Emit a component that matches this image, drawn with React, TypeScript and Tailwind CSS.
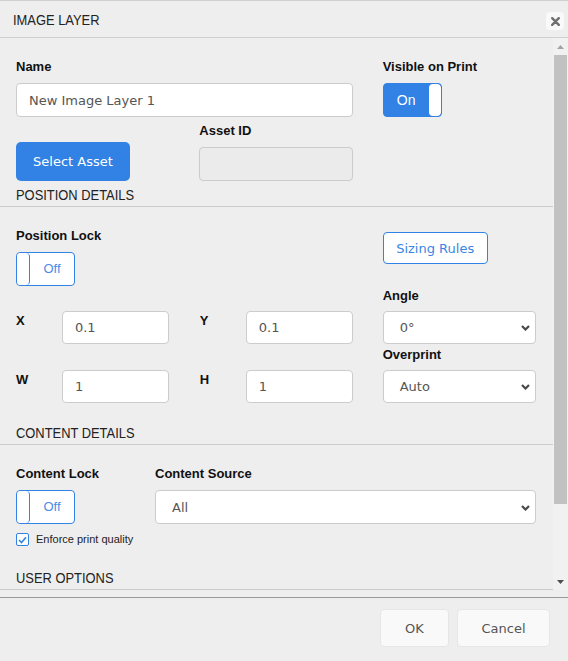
import React from "react";

const LABEL = "font-['Liberation_Sans',Arial,sans-serif] font-bold text-[13px] leading-[16px] text-[#111]";
const FIELD = "font-['DejaVu_Sans',Verdana,sans-serif] text-[13px] text-[#555]";
const HEAD = "inline-block origin-left scale-x-[0.86] font-['Liberation_Sans',Arial,sans-serif] text-[15px] leading-[17px] text-[#222] whitespace-nowrap";

function Chevron() {
  return (
    <svg width="9" height="6" viewBox="0 0 9 6" className="block">
      <polyline points="1,1 4.5,4.5 8,1" fill="none" stroke="#4a4a4a" strokeWidth="2.2" />
    </svg>
  );
}

function Select({ value, className }: { value: string; className?: string }) {
  return (
    <div className={`flex items-center justify-between bg-white border border-[#cccccc] rounded-[4px] pl-[16px] pr-[5px] pt-[1px] ${FIELD} ${className ?? ""}`}>
      <span>{value}</span>
      <Chevron />
    </div>
  );
}

function Input({ value, className }: { value: string; className?: string }) {
  return (
    <div className={`flex items-center bg-white border border-[#cccccc] rounded-[4px] pl-[12px] pt-[1px] ${FIELD} ${className ?? ""}`}>
      {value}
    </div>
  );
}

function ToggleOff() {
  return (
    <div className="flex w-[59px] h-[34px] bg-white border border-[#3182e4] rounded-[4px] overflow-hidden">
      <div className="w-[13px] h-full border-r border-[#3182e4] rounded-[4px] bg-white" />
      <div className="flex-1 flex items-center justify-center font-['Liberation_Sans',Arial,sans-serif] text-[13px] text-[#4a8ce8]">
        Off
      </div>
    </div>
  );
}

function ToggleOn() {
  return (
    <div className="flex w-[59px] h-[34px] bg-[#3182e4] border border-[#3182e4] rounded-[4px] overflow-hidden">
      <div className="flex-1 flex items-center justify-center font-['Liberation_Sans',Arial,sans-serif] text-[14px] text-white">
        On
      </div>
      <div className="w-[12px] h-full bg-white rounded-[4px]" />
    </div>
  );
}

function SectionHead({ title, className }: { title: string; className?: string }) {
  return (
    <div className={`pl-4 pb-[3px] border-b border-[#cccccc] leading-[17px] ${className ?? ""}`}>
      <span className={HEAD}>{title}</span>
    </div>
  );
}

function XYRow({ label, value }: { label: string; value: string }) {
  return (
    <div className="flex items-start">
      <div className={`${LABEL} w-[46px] mt-[2px]`}>{label}</div>
      <Input value={value} className="w-[107px] h-[33px]" />
    </div>
  );
}

export default function App() {
  return (
    <div className="w-[568px] h-[661px] bg-[#eeeeee] flex flex-col overflow-hidden">
      {/* Header */}
      <div className="h-[38px] flex justify-between border-t border-b border-[#cfcfcf] pl-[13px] pr-[4px]">
        <div className="mt-[10px] leading-[17px]">
          <span className={HEAD}>IMAGE LAYER</span>
        </div>
        <div className="mt-[11px] w-[18px] h-[18px] rounded-[4px] bg-[#f9f9f9] flex items-center justify-center">
          <svg width="9" height="9" viewBox="0 0 9 9">
            <path d="M1.2 1.2 L7.8 7.8 M7.8 1.2 L1.2 7.8" stroke="#707070" strokeWidth="2.4" strokeLinecap="round" />
          </svg>
        </div>
      </div>

      {/* Body */}
      <div className="flex h-[552px]">
        <div className="flex-1 overflow-hidden pt-[21px]">
          {/* Top section */}
          <div className="pl-4 pr-[17px]">
            <div className="grid grid-cols-3 gap-x-[30px]">
              <div className="col-span-2">
                <div className={`${LABEL} mb-[8px]`}>Name</div>
                <Input value="New Image Layer 1" className="h-[34px] w-full" />
              </div>
              <div>
                <div className={`${LABEL} mb-[8px]`}>Visible on Print</div>
                <ToggleOn />
              </div>
            </div>
            <div className="grid grid-cols-3 gap-x-[30px] mt-[6px] items-end">
              <div>
                <div className="w-[114px] h-[39px] rounded-[5px] bg-[#3182e4] flex items-center justify-center pt-[1px] font-['DejaVu_Sans',Verdana,sans-serif] text-[13px] text-white">
                  Select Asset
                </div>
              </div>
              <div>
                <div className={`${LABEL} mb-[8px]`}>Asset ID</div>
                <div className="h-[34px] w-full bg-[#ebebeb] border border-[#cccccc] rounded-[4px]" />
              </div>
            </div>
          </div>

          <SectionHead title="POSITION DETAILS" className="mt-[5px]" />

          <div className="pl-4 pr-[17px] pt-[21px]">
            <div className="grid grid-cols-3 gap-x-[30px]">
              <div className="col-span-2">
                <div className={`${LABEL} mb-[8px]`}>Position Lock</div>
                <ToggleOff />
                <div className="grid grid-cols-2 gap-x-[31px] gap-y-[26px] mt-[25px]">
                  <XYRow label="X" value="0.1" />
                  <XYRow label="Y" value="0.1" />
                  <XYRow label="W" value="1" />
                  <XYRow label="H" value="1" />
                </div>
              </div>
              <div>
                <div className="mt-[4px] w-[105px] h-[32px] bg-white border border-[#3182e4] rounded-[4px] flex items-center justify-center pt-[1px] font-['DejaVu_Sans',Verdana,sans-serif] text-[13px] text-[#3a86e4]">
                  Sizing Rules
                </div>
                <div className={`${LABEL} mt-[24px]`}>Angle</div>
                <Select value="0°" className="mt-[7px] h-[33px] w-full" />
                <div className={`${LABEL} mt-[3px]`}>Overprint</div>
                <Select value="Auto" className="mt-[7px] h-[33px] w-full" />
              </div>
            </div>
          </div>

          <SectionHead title="CONTENT DETAILS" className="mt-[21px]" />

          <div className="pl-4 pr-[17px] pt-[21px]">
            <div className="flex">
              <div className="w-[139px]">
                <div className={`${LABEL} mb-[8px]`}>Content Lock</div>
                <ToggleOff />
              </div>
              <div className="flex-1">
                <div className={`${LABEL} mb-[8px]`}>Content Source</div>
                <Select value="All" className="h-[34px] w-full" />
              </div>
            </div>
            <div className="flex items-center mt-[9px] h-[13px]">
              <div className="w-[13px] h-[13px] bg-white border border-[#3182e4] rounded-[2px] flex items-center justify-center">
                <svg width="9" height="8" viewBox="0 0 9 8">
                  <polyline points="1,4 3.5,6.5 8,1.2" fill="none" stroke="#3182e4" strokeWidth="1.6" />
                </svg>
              </div>
              <span className="ml-[7px] font-['Liberation_Sans',Arial,sans-serif] text-[11px] text-[#222]">
                Enforce print quality
              </span>
            </div>
          </div>

          <SectionHead title="USER OPTIONS" className="mt-[23px]" />
        </div>

        {/* Scrollbar */}
        <div className="w-[15px] bg-[#f1f1f1] flex flex-col">
          <div className="h-[17px] flex items-center justify-center">
            <svg width="7" height="4" viewBox="0 0 7 4"><polygon points="0,4 3.5,0 7,4" fill="#a3a3a3" /></svg>
          </div>
          <div className="mx-[1px] h-[449px] bg-[#c1c1c1]" />
          <div className="flex-1" />
          <div className="h-[17px] flex items-center justify-center">
            <svg width="7" height="4" viewBox="0 0 7 4"><polygon points="0,0 3.5,4 7,0" fill="#505050" /></svg>
          </div>
        </div>
      </div>

      <div className="h-[7px]" />

      {/* Footer */}
      <div className="border-t border-[#9a9a9a] flex justify-end gap-[8px] pt-[11px] pr-[18px]">
        <div className="w-[69px] h-[38px] bg-[#f9f9f9] border border-[#e6e6e6] rounded-[4px] flex items-center justify-center pt-[1px] font-['DejaVu_Sans',Verdana,sans-serif] text-[13px] text-[#555]">
          OK
        </div>
        <div className="w-[93px] h-[38px] bg-[#f9f9f9] border border-[#e6e6e6] rounded-[4px] flex items-center justify-center pt-[1px] font-['DejaVu_Sans',Verdana,sans-serif] text-[13px] text-[#555]">
          Cancel
        </div>
      </div>
    </div>
  );
}
